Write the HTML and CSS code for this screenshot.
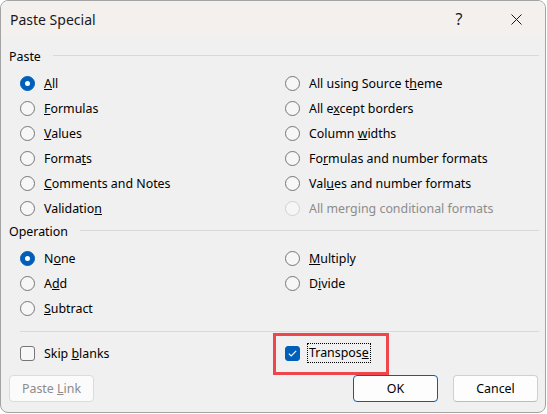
FILE: index.html
```html
<!DOCTYPE html>
<html>
<head>
<meta charset="utf-8">
<link rel="stylesheet" href="styles.css">
</head>
<body>
<div class="window">
  <div class="titlebar">
    <span class="title">Paste Special</span>
    <span class="cap help">?</span>
    <span class="cap close">
      <svg width="11" height="11" viewBox="0 0 11 11"><path d="M0.5 0.5 L10.5 10.5 M10.5 0.5 L0.5 10.5" stroke="#1a1a1a" stroke-width="1" fill="none"/></svg>
    </span>
  </div>
  <div class="content">
    <div class="group-head"><span>Paste</span><span class="rule"></span></div>
    <div class="grid six">
      <label class="opt"><span class="radio on"></span><span><u>A</u>ll</span></label>
      <label class="opt"><span class="radio"></span><span>All using Source t<u>h</u>eme</span></label>
      <label class="opt"><span class="radio"></span><span><u>F</u>ormulas</span></label>
      <label class="opt"><span class="radio"></span><span>All e<u>x</u>cept borders</span></label>
      <label class="opt"><span class="radio"></span><span><u>V</u>alues</span></label>
      <label class="opt"><span class="radio"></span><span>Column <u>w</u>idths</span></label>
      <label class="opt"><span class="radio"></span><span>Forma<u>t</u>s</span></label>
      <label class="opt"><span class="radio"></span><span>Fo<u>r</u>mulas and number formats</span></label>
      <label class="opt"><span class="radio"></span><span><u>C</u>omments and Notes</span></label>
      <label class="opt"><span class="radio"></span><span>Val<u>u</u>es and number formats</span></label>
      <label class="opt"><span class="radio"></span><span>Validatio<u>n</u></span></label>
      <label class="opt disabled"><span class="radio"></span><span>All mer<u>g</u>ing conditional formats</span></label>
    </div>
    <div class="group-head op"><span>Operation</span><span class="rule"></span></div>
    <div class="grid">
      <label class="opt"><span class="radio on"></span><span>N<u>o</u>ne</span></label>
      <label class="opt"><span class="radio"></span><span><u>M</u>ultiply</span></label>
      <label class="opt"><span class="radio"></span><span>A<u>d</u>d</span></label>
      <label class="opt"><span class="radio"></span><span>D<u>i</u>vide</span></label>
      <label class="opt"><span class="radio"></span><span><u>S</u>ubtract</span></label>
    </div>
    <div class="sep"></div>
    <div class="grid checks">
      <label class="opt"><span class="check"></span><span>Skip <u>b</u>lanks</span></label>
      <label class="opt transpose">
        <span class="check on"><svg width="9" height="7" viewBox="0 0 9 7"><path d="M0.8 3.6 L3.2 5.9 L8.2 0.9" stroke="#fff" stroke-width="1.1" fill="none"/></svg></span>
        <span class="focus">Transpos<u>e</u></span>
        <span class="highlight"></span>
      </label>
    </div>
    <div class="buttons">
      <button class="btn disabled">Paste <u>L</u>ink</button>
      <span class="spacer"></span>
      <button class="btn primary">OK</button>
      <button class="btn">Cancel</button>
    </div>
  </div>
</div>
</body>
</html>
```

FILE: styles.css
```css
html, body {
  margin: 0;
  padding: 0;
  background: #ffffff;
}
body {
  font-family: "Segoe UI", "Noto Sans", "Open Sans", sans-serif;
  font-size: 12.4px;
  color: #000;
}
.window {
  width: 546px;
  height: 413px;
  box-sizing: border-box;
  border: 1px solid #a3a3a3;
  border-radius: 8px;
  overflow: hidden;
  background: #f0f0f0;
  display: flex;
  flex-direction: column;
}
.titlebar {
  height: 36px;
  flex: none;
  background: #f4f0ee;
  display: flex;
  align-items: center;
  padding-left: 9px;
}
.title {
  font-size: 14px;
  flex: 1;
  color: #1a1a1a;
}
.cap {
  width: 46px;
  height: 36px;
  display: flex;
  align-items: center;
  justify-content: center;
}
.help {
  font-size: 16px;
  margin-right: 11px;
  color: #1a1a1a;
}
.close {
  margin-right: 6px;
}
.content {
  flex: 1;
  display: flex;
  flex-direction: column;
  padding: 10px 6px 0 8px;
}
.group-head {
  height: 18px;
  display: flex;
  align-items: center;
  gap: 12px;
}
.group-head .rule {
  flex: 1;
  height: 1px;
  background: #d9d9d9;
  margin-top: -1px;
}
.group-head.op {
  margin-top: 1px;
}
.grid {
  display: grid;
  grid-template-columns: 265px 1fr;
  grid-auto-rows: 25px;
  margin: 6px 0 0 11px;
}
.opt {
  display: flex;
  align-items: center;
  gap: 9px;
  white-space: nowrap;
}
.radio {
  width: 15px;
  height: 15px;
  box-sizing: border-box;
  border: 1px solid #767676;
  border-radius: 50%;
  background: #f7f7f7;
  flex: none;
  position: relative;
}
.radio.on {
  background: #005fb8;
  border-color: #005fb8;
}
.radio.on::after {
  content: "";
  position: absolute;
  left: 4px;
  top: 4px;
  width: 5px;
  height: 5px;
  border-radius: 50%;
  background: #fff;
}
.disabled {
  color: #8c8c8c;
}
.opt.disabled .radio {
  border-color: #d2d2d2;
  background: #f6f6f6;
}
.sep {
  height: 1px;
  background: #d9d9d9;
  margin: 10px 0 0 11px;
}
.grid.checks {
  margin-top: 11px;
  grid-auto-rows: 20px;
}
.check {
  width: 15px;
  height: 15px;
  box-sizing: border-box;
  border: 1px solid #767676;
  border-radius: 3px;
  background: #f7f7f7;
  flex: none;
  display: flex;
  align-items: center;
  justify-content: center;
}
.check.on {
  background: #005fb8;
  border-color: #005fb8;
}
.transpose {
  position: relative;
  gap: 7px;
}
.focus {
  border: 1px dotted #000;
  padding: 0 1px 1px 1px;
  line-height: 17px;
}
.highlight {
  position: absolute;
  left: -12px;
  top: -10px;
  width: 116px;
  height: 42px;
  box-sizing: border-box;
  border: 3px solid #f0454a;
}
.buttons {
  display: flex;
  align-items: center;
  gap: 15px;
  margin-top: 12px;
  padding-left: 0;
  padding-right: 1px;
}
.spacer {
  flex: 1;
}
.btn {
  font-family: inherit;
  font-size: 12.4px;
  width: 85px;
  height: 27px;
  box-sizing: border-box;
  border: 1px solid #d0d0d0;
  border-bottom-color: #bdbdbd;
  border-radius: 4px;
  background: #fdfdfd;
  color: #000;
  padding: 0;
}
.btn.disabled {
  color: #8c8c8c;
  border-color: #dcdcdc;
  background: #fbfbfb;
}
.btn.primary {
  border-color: #005fb8;
}
```
